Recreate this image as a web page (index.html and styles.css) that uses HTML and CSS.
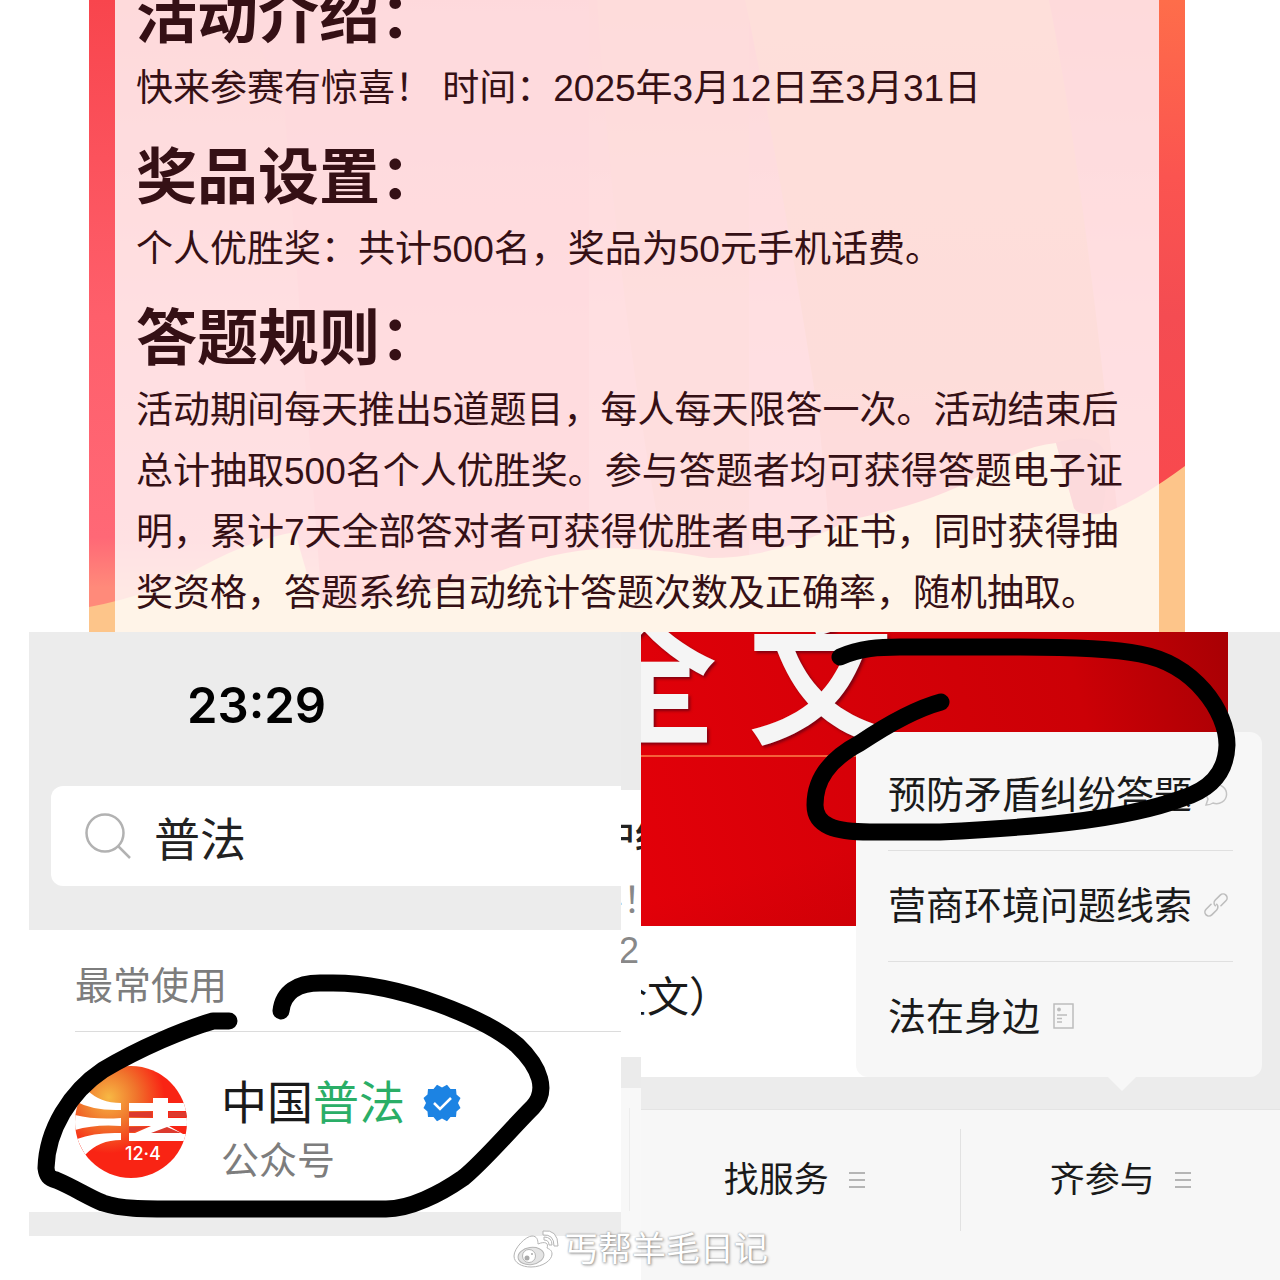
FILE: index.html
```html
<!DOCTYPE html>
<html lang="zh-CN">
<head>
    <meta charset="UTF-8">
    <meta name="viewport" content="width=device-width, initial-scale=1.0">
    <title>普法答题活动</title>
    <link rel="stylesheet" href="styles.css">
</head>
<body>
<main class="page">
    <!-- poster -->
    <section class="poster">
        <svg class="poster-art" viewBox="0 0 1096 632" preserveAspectRatio="none" aria-hidden="true">
            <defs>
                <linearGradient id="red" x1="0" y1="0" x2="0" y2="1">
                    <stop offset="0" stop-color="#f8454d"/>
                    <stop offset=".5" stop-color="#fe5f6b"/>
                    <stop offset=".85" stop-color="#ff6876"/>
                    <stop offset=".93" stop-color="#ff8a7a"/>
                </linearGradient>
                <linearGradient id="redRight" x1="0" y1="0" x2="0" y2="1">
                    <stop offset="0" stop-color="#fe6d4a"/>
                    <stop offset=".28" stop-color="#fb5450"/>
                    <stop offset=".5" stop-color="#f44c52"/>
                    <stop offset="1" stop-color="#fc464a"/>
                </linearGradient>
                <linearGradient id="peach" x1="0" y1="0" x2="0" y2="1">
                    <stop offset="0" stop-color="#f85f48"/>
                    <stop offset=".6" stop-color="#f65548"/>
                    <stop offset=".85" stop-color="#fc4a5c"/>
                </linearGradient>
            </defs>
            <rect width="1096" height="632" fill="url(#red)"/>
            <path d="M195 100L235 632H500V0H150Z" fill="#fb4458" opacity=".6"/>
            <path d="M508 0Q530 340 590 632H660V0Z" fill="#f6564e" opacity=".6"/>
            <path d="M656 0Q690 160 730 420L750 632H1040Q1000 200 960 0Z" fill="url(#peach)"/>
            <path d="M1070 0H1096V632H1070Z" fill="url(#redRight)"/>
            <path d="M0 607Q60 596 110 568Q160 540 206 532L225 598Q234 612 270 605Q340 590 400 575Q470 548 530 548Q580 550 620 558Q690 558 760 520Q850 502 900 470Q930 447 967 443L985 508Q990 518 1018 512Q1050 500 1096 466V632H0Z" fill="#fdc58a"/>
            <path d="M967 443Q1005 432 1015 450Q1020 490 1012 514Q990 516 985 508Z" fill="#e2404e" opacity=".5"/>
        </svg>
        <div class="poster-panel">
            <h2>活动介绍：</h2>
            <p>快来参赛有惊喜！ 时间：2025年3月12日至3月31日</p>
            <h2>奖品设置：</h2>
            <p>个人优胜奖：共计500名，奖品为50元手机话费。</p>
            <h2>答题规则：</h2>
            <p>活动期间每天推出5道题目，每人每天限答一次。活动结束后总计抽取500名个人优胜奖。参与答题者均可获得答题电子证明，累计7天全部答对者可获得优胜者电子证书，同时获得抽奖资格，答题系统自动统计答题次数及正确率，随机抽取。</p>
        </div>
    </section>

    <div class="shots">
        <!-- search result -->
        <section class="search-shot">
            <header class="search-head">
                <time>23:29</time>
                <label class="search-box">
                    <svg width="48" height="48" viewBox="0 0 48 48" fill="none" stroke="#b2b2b2" stroke-width="2.500" aria-hidden="true">
                        <circle cx="21" cy="21" r="18.5"/>
                        <path d="M34 34L46 46"/>
                    </svg>
                    <input type="text" value="普法" aria-label="搜索">
                </label>
            </header>
            <div class="results">
                <h3>最常使用</h3>
                <a class="account" href="#">
                    <svg class="avatar" viewBox="0 0 112 112" aria-hidden="true">
                        <defs>
                            <radialGradient id="sun" cx=".3" cy=".28" r=".5">
                                <stop offset="0" stop-color="#f7b844"/>
                                <stop offset=".5" stop-color="#f0742c"/>
                                <stop offset="1" stop-color="#f92414"/>
                            </radialGradient>
                            <clipPath id="disc"><circle cx="56" cy="56" r="56"/></clipPath>
                        </defs>
                        <g clip-path="url(#disc)">
                            <rect width="112" height="112" fill="url(#sun)"/>
                            <g fill="#fff">
                                <path d="M12 24Q25 37 46 37V44Q18 45 0 35Z"/>
                                <path d="M0 49Q20 54 46 52V60Q20 58 0 64Z"/>
                                <path d="M2 73Q20 66 46 67V74Q24 74 10 89Z"/>
                                <path d="M54 37H78V32H93V37H112V45H93V52H112V60H94L108 68H112V75H54V67H60L76 60H54V52H78V45H54Z"/>
                            </g>
                            <path d="M54 46H77V51H54ZM94 46H112V51H94ZM54 61H72L58 66H54ZM76 67L92 61L106 67Z" fill="#dc3a2e"/>
                            <text x="50" y="94" fill="#fff">12·4</text>
                        </g>
                    </svg>
                    <span class="account-text">
                        <span class="account-name">中国<em>普法</em>
                            <svg width="38" height="38" viewBox="0 0 38 38" aria-hidden="true">
                                <path d="M19 3.500L24 .8L27.500 5L33 5L33.500 10.500L37.500 14L35 19L37.500 24L33.500 27.500L33 33L27.500 33L24 37.200L19 34.500L14 37.200L10.500 33L5 33L4.500 27.500L.5 24L3 19L.5 14L4.500 10.500L5 5L10.500 5L14 .8Z" fill="#1c83e3"/>
                                <path d="M11 19L17 25L28 14" fill="none" stroke="#fff" stroke-width="2.500"/>
                            </svg>
                        </span>
                        <span class="account-type">公众号</span>
                    </span>
                </a>
            </div>
            <svg class="mark mark-left" width="520" height="250" viewBox="30 970 520 250" aria-hidden="true">
                <path d="M229 1021H213C185 1029 140 1048 103 1070C70 1092 47 1130 46 1168C47 1176 49 1178 56 1180C75 1188 88 1197 103 1203C122 1209 140 1209 180 1209H386C410 1209 440 1194 463 1178C482 1163 510 1130 533 1107C548 1091 541 1068 517 1045C485 1018 400 983 333 983H320C297 983 283 992 281 1011"/>
            </svg>
        </section>

        <!-- strip of the article underneath -->
        <aside class="strip">
            <div class="strip-text">
                <p class="strip-title">中纪</p>
                <p>喜！</p>
                <p class="strip-num">2</p>
            </div>
            <div class="strip-bar"></div>
        </aside>

        <!-- official account page -->
        <section class="menu-shot">
            <div class="feed">
                <div class="banner">
                    <h2><span>全</span><span>文</span></h2>
                </div>
                <p class="feed-title">全文）</p>
                <nav class="popup">
                    <a href="#">预防矛盾纠纷答题
                        <svg width="24" height="26" viewBox="0 0 24 26" fill="none" stroke="#c4c4c4" stroke-width="1.500" aria-hidden="true">
                            <path d="M2 23L4 17A10 9.500 0 1 1 9 21Q6 23 2 23Z"/>
                        </svg>
                    </a>
                    <a href="#">营商环境问题线索
                        <svg width="24" height="26" viewBox="0 0 24 26" fill="none" stroke="#bdbdbd" stroke-width="1.600" stroke-linecap="round" aria-hidden="true">
                            <g transform="translate(12 12) rotate(-45)">
                                <path d="M-3 -4H-10A4 4 0 0 0 -10 4H-3A4 4 0 0 0 1 0"/>
                                <path d="M3 4H10A4 4 0 0 0 10 -4H3A4 4 0 0 0 -1 0"/>
                            </g>
                        </svg>
                    </a>
                    <a href="#">法在身边
                        <svg width="24" height="28" viewBox="0 0 24 28" fill="none" stroke="#bdbdbd" stroke-width="1.500" aria-hidden="true">
                            <path d="M2 1H21V25H2ZM5 12H15M5 15.500H10M5 19H10"/>
                            <circle cx="7" cy="6.500" r="1.200" fill="#bdbdbd"/>
                        </svg>
                    </a>
                </nav>
            </div>
            <div class="tabs">
                <button type="button">找服务
                    <svg width="16" height="16" viewBox="0 0 16 16" stroke="#b5b5b5" stroke-width="1.800" aria-hidden="true"><path d="M0 1H16M0 8H16M0 15H16"/></svg>
                </button>
                <button type="button">齐参与
                    <svg width="16" height="16" viewBox="0 0 16 16" stroke="#b5b5b5" stroke-width="1.800" aria-hidden="true"><path d="M0 1H16M0 8H16M0 15H16"/></svg>
                </button>
            </div>
            <svg class="mark mark-right" width="440" height="210" viewBox="800 635 440 210" aria-hidden="true">
                <path d="M840 657C860 648 880 647 900 647H1020C1060 647 1110 648 1140 654C1195 664 1227 712 1227 745C1226 775 1208 790 1183 798C1120 822 1020 828 940 832H870C835 832 815 826 815 805C815 780 828 760 860 743C890 723 915 709 941 702"/>
            </svg>
        </section>
    </div>

    <div class="watermark">
        <svg width="48" height="42" viewBox="0 0 48 42" aria-hidden="true">
            <g fill="#fff" stroke="#b5b5b5" stroke-width="1">
                <path d="M20 8C14 8 2 20 2 28C2 35 10 39 19 39C31 39 40 32 40 26C40 22 37 21 35 20C37 15 33 13 26 16C26 12 25 8 20 8Z"/>
                <ellipse cx="19" cy="28" rx="13" ry="8.500" transform="rotate(-8 19 28)" fill="#e4e4e4"/>
                <circle cx="17" cy="28" r="6.500"/>
                <path d="M31 3Q46 1 46 18L42 18Q42 6 31 7Z"/>
                <path d="M32 9Q40 9 40 17L37 17Q37 12 32 12Z"/>
            </g>
            <circle cx="15" cy="30" r="2.500" fill="#aaa"/>
            <circle cx="20" cy="26" r="1" fill="#aaa"/>
        </svg>
        <span>丐帮羊毛日记</span>
    </div>
</main>
</body>
</html>
```
FILE: styles.css
```css
*{
    box-sizing: border-box;
}
body, h2, h3, p{
    margin: 0;
}
body{
    background-color: white;
    font-family: "Liberation Sans", "Noto Sans CJK SC", sans-serif;
    color: #1a1a1a;
}
a{
    color: inherit;
    text-decoration: none;
}
.page{
    position: relative;
    overflow: hidden;
}

/* poster */
.poster{
    position: relative;
    overflow: hidden;
    margin: 0 95px 0 89px;
    padding: 0 26px;
}
.poster-art{
    position: absolute;
    left: 0;
    top: 0;
    width: 100%;
    height: 100%;
}
.poster-panel{
    position: relative;
    margin-top: -42px;
    padding: 0 30px 8px 21px;
    background-color: rgba(255, 255, 255, 0.8);
    color: #351015;
}
.poster-panel h2{
    padding-top: 18px;
    font-size: 61px;
    line-height: 82px;
    font-weight: 700;
}
.poster-panel p{
    font-size: 37px;
    line-height: 61px;
}

.shots{
    display: grid;
    grid-template-columns: minmax(0, 592fr) 20px minmax(0, 639fr);
    align-items: start;
    padding-left: 29px;
}

/* search result */
.search-shot{
    position: relative;
    padding-bottom: 24px;
    background-color: #ececec;
}
.search-head{
    padding: 44px 0 44px 22px;
}
.search-head time{
    display: block;
    padding-left: 136px;
    margin-bottom: 50px;
    font-family: Inter, "Liberation Sans", sans-serif;
    font-size: 49px;
    line-height: 60px;
    font-weight: 600;
    color: black;
}
.search-box{
    display: flex;
    align-items: center;
    gap: 22px;
    height: 100px;
    padding-left: 33px;
    border-radius: 12px 0 0 12px;
    background-color: white;
}
.search-box svg{
    flex: none;
}
.search-box input{
    flex: 1;
    min-width: 0;
    padding: 0;
    border: 0;
    outline: none;
    background: none;
    font: inherit;
    font-size: 46px;
    color: #222;
}
.results{
    padding-left: 46px;
    background-color: white;
}
.results h3{
    padding: 28px 0 17px;
    border-bottom: 1px solid #dcdcdc;
    font-size: 38px;
    line-height: 56px;
    font-weight: 400;
    color: #7d7d7d;
}
.account{
    display: flex;
    align-items: flex-start;
    gap: 34px;
    padding: 34px 0 23px;
}
.avatar{
    flex: none;
    width: 112px;
    height: 112px;
}
.avatar text{
    font-family: Inter, "Liberation Sans", sans-serif;
    font-size: 18px;
    font-weight: 500;
}
.account-text{
    padding-top: 7px;
}
.account-name{
    display: flex;
    align-items: center;
    font-size: 46px;
    line-height: 60px;
}
.account-name em{
    font-style: normal;
    color: #2aae67;
}
.account-name svg{
    margin-left: 18px;
}
.account-type{
    display: block;
    font-size: 38px;
    line-height: 56px;
    color: #7d7d7d;
}

/* hand-drawn circles */
.mark{
    position: absolute;
    fill: none;
    stroke: black;
    stroke-width: 17px;
    stroke-linecap: round;
    stroke-linejoin: round;
}
.mark-left{
    left: 1px;
    top: 338px;
}
.mark-right{
    right: 40px;
    top: 3px;
}

/* strip */
.strip{
    overflow: hidden;
    padding-top: 158px;
    background-color: #ebebeb;
    white-space: nowrap;
}
.strip-text{
    padding: 22px 0 81px;
    background-color: white;
}
.strip p{
    font-size: 36px;
    line-height: 50px;
    text-indent: -34px;
    color: #888;
}
.strip .strip-title{
    margin-bottom: 14px;
    text-indent: -22px;
    font-weight: 500;
    color: #222;
}
.strip .strip-num{
    text-indent: -2px;
}
.strip-bar{
    height: 148px;
    margin-top: 31px;
    padding: 20px 0 25px 8px;
    background-color: #f8f8f8;
}
.strip-bar::before{
    content: "";
    display: block;
    width: 1px;
    height: 100%;
    background-color: #ededed;
}

/* official account */
.menu-shot{
    position: relative;
    overflow: hidden;
    background-color: #ececec;
}
.feed{
    position: relative;
    padding: 0 52px 32px 0;
}
.banner{
    overflow: hidden;
    height: 294px;
    background: linear-gradient(#f5603a, #f5603a) 0 123px / 100% 2px no-repeat,
        linear-gradient(165deg, transparent 60%, rgba(150, 0, 0, 0.3)),
        linear-gradient(75deg, #e30009 0%, #d60008 40%, #cc0006 75%, #a80004 100%);
}
.banner h2{
    display: flex;
    gap: 31px;
    margin: -29px 0 0 -69px;
    font-size: 145px;
    line-height: 160px;
    font-weight: 700;
    color: #f5f5f5;
    text-shadow: 2px 2px 3px rgba(90, 0, 20, 0.7);
}
.feed-title{
    overflow: hidden;
    padding: 42px 0 49px;
    background-color: white;
    font-size: 42px;
    line-height: 60px;
    text-indent: -36px;
}
.popup{
    position: absolute;
    right: 18px;
    bottom: 32px;
    padding: 8px 29px 5px 32px;
    border-radius: 12px;
    background-color: #f7f7f7;
}
.popup::after{
    content: "";
    position: absolute;
    right: 126px;
    top: 100%;
    border: solid transparent;
    border-width: 14px 14px 0;
    border-top-color: #f7f7f7;
}
.popup a{
    display: flex;
    align-items: center;
    gap: 12px;
    padding-right: 5px;
    font-size: 38px;
    line-height: 110px;
    white-space: nowrap;
}
.popup svg{
    overflow: visible;
}
.popup a + a{
    border-top: 1px solid #e0e0e0;
}
.tabs{
    display: flex;
    padding: 19px 0 49px;
    border-top: 1px solid #e4e4e4;
    background-color: #f7f7f7;
}
.tabs button{
    flex: 1 1 50%;
    display: flex;
    align-items: center;
    justify-content: center;
    gap: 20px;
    height: 102px;
    padding: 0;
    border: 0;
    background: none;
    font: inherit;
    font-size: 35px;
    line-height: 50px;
    color: #1a1a1a;
}
.tabs button:first-child{
    padding-right: 12px;
    border-right: 1px solid #e2e2e2;
}

.watermark{
    position: absolute;
    left: 50%;
    bottom: 6px;
    display: flex;
    align-items: center;
    gap: 4px;
    transform: translateX(-50%);
    font-size: 34px;
    line-height: 50px;
    color: white;
    text-shadow: 0 0 2px #888, 1px 1px 3px #999;
    white-space: nowrap;
}
```
